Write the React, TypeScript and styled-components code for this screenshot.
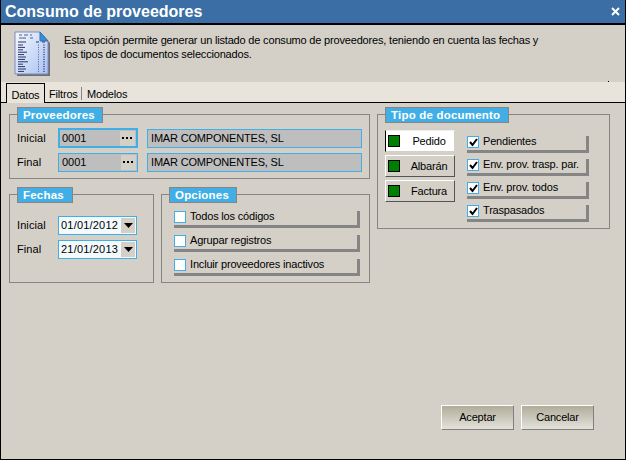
import React from 'react';
import styled, { createGlobalStyle } from 'styled-components';

const UI_FONT = `"Liberation Sans", Arial, sans-serif`;
const CYAN = '#41afe6';
const FACE = '#d4d0c8';
const LINE = '#858585';

const GlobalStyle = createGlobalStyle`
  html, body {
    margin: 0;
    padding: 0;
    background: ${FACE};
  }
  * {
    box-sizing: border-box;
  }
`;

const Window = styled.div`
  width: 626px;
  height: 460px;
  display: flex;
  flex-direction: column;
  background: ${FACE};
  border: 1px solid #000;
  border-top: 0;
  font-family: ${UI_FONT};
  font-size: 11px;
  letter-spacing: -0.18px;
  color: #000;
  overflow: hidden;
  white-space: nowrap;
`;

const TitleBar = styled.div`
  height: 25px;
  flex: none;
  display: flex;
  align-items: center;
  justify-content: space-between;
  padding: 0 5px 0 4px;
  background: #3a6ea5;
  border-bottom: 2px solid #000;
  color: #fff;
`;

const TitleText = styled.span`
  font-size: 16px;
  font-weight: 700;
  letter-spacing: 0;
`;

const Header = styled.div`
  position: relative;
  height: 57px;
  flex: none;
  display: flex;
  padding: 6px 0 0 13px;

  &::after {
    content: '';
    position: absolute;
    right: 16px;
    bottom: 0;
    width: 1px;
    height: 1px;
    background: #000;
  }
`;

const HeaderText = styled.p`
  margin: 2px 0 0 13px;
  line-height: 14px;
`;

const TabStrip = styled.div`
  height: 21px;
  flex: none;
  display: flex;
  align-items: flex-end;
  padding-left: 5px;
  background: #e8e4dc;
  border-bottom: 1px solid #000;
`;

const ActiveTab = styled.div`
  position: relative;
  top: 1px;
  width: 39px;
  height: 20px;
  display: flex;
  align-items: center;
  justify-content: center;
  padding-top: 2px;
  background: #e8e4dc;
  border: 1px solid #000;
  border-bottom: 0;
`;

const Tab = styled.div<{ $width: number; $divided?: boolean }>`
  width: ${p => p.$width}px;
  height: 13px;
  margin-bottom: 2px;
  display: flex;
  align-items: center;
  padding-left: ${p => (p.$divided ? 4 : 5)}px;
  border-right: ${p => (p.$divided ? `1px solid ${LINE}` : '0')};
`;

const Content = styled.div`
  flex: 1;
  display: flex;
  gap: 7px;
  padding: 11px 0 0 8px;
`;

const LeftColumn = styled.div`
  width: 361px;
  display: flex;
  flex-direction: column;
  gap: 15px;
`;

const RightColumn = styled.div`
  width: 233px;
`;

const BottomRow = styled.div`
  display: flex;
  gap: 7px;
`;

const Group = styled.fieldset<{ $width?: number; $height: number; $pad: string }>`
  position: relative;
  margin: 0;
  min-width: 0;
  width: ${p => (p.$width ? `${p.$width}px` : '100%')};
  height: ${p => p.$height}px;
  padding: ${p => p.$pad};
  border: 1px solid ${LINE};
`;

const GroupLabel = styled.div<{ $width: number }>`
  position: absolute;
  top: -8px;
  left: 7px;
  width: ${p => p.$width}px;
  height: 16px;
  display: flex;
  align-items: center;
  padding-left: 5px;
  background: ${CYAN};
  border: 1px solid ${LINE};
  color: #fff;
  font-size: 11.5px;
  font-weight: 700;
  letter-spacing: 0.2px;
`;

const FieldRows = styled.div`
  display: flex;
  flex-direction: column;
  gap: 4px;
`;

const FieldRow = styled.div`
  display: flex;
  align-items: center;
  height: 20px;
`;

const FieldLabel = styled.span`
  width: 41px;
  flex: none;
  letter-spacing: 0.1px;
`;

const CodeInput = styled.div<{ $focused?: boolean }>`
  width: 80px;
  height: ${p => (p.$focused ? '20px' : '19px')};
  display: flex;
  align-items: center;
  justify-content: space-between;
  padding: 0 1px 0 ${p => (p.$focused ? '2px' : '3px')};
  background: #bebebe;
  border: ${p => (p.$focused ? 2 : 1)}px solid ${CYAN};
  letter-spacing: 0;
`;

const DotsButton = styled.span`
  width: 15px;
  height: 15px;
  display: flex;
  align-items: center;
  justify-content: center;
  background: ${FACE};
`;

const NameField = styled.div`
  width: 215px;
  height: 19px;
  margin-left: 9px;
  display: flex;
  align-items: center;
  padding-left: 3px;
  background: #bebebe;
  border: 1px solid ${CYAN};
`;

const DateInput = styled.div`
  width: 79px;
  height: 19px;
  display: flex;
  align-items: center;
  justify-content: space-between;
  padding: 0 1px 0 2px;
  background: #f3fafe;
  border: 1px solid ${CYAN};
  letter-spacing: 0.2px;
`;

const ArrowButton = styled.span`
  width: 14px;
  height: 15px;
  display: flex;
  align-items: center;
  justify-content: center;
  background: ${FACE};
`;

const CheckList = styled.div<{ $gap: number; $top?: number }>`
  display: flex;
  flex-direction: column;
  gap: ${p => p.$gap}px;
  padding-top: ${p => p.$top ?? 0}px;
`;

const CheckRow = styled.div<{ $width: number }>`
  width: ${p => p.$width}px;
  height: 17px;
  display: flex;
  align-items: flex-start;
  gap: 4px;
  border-right: 3px solid ${LINE};
  border-bottom: 3px solid ${LINE};
`;

const CheckBox = styled.span`
  width: 12px;
  height: 12px;
  flex: none;
  display: flex;
  align-items: center;
  justify-content: center;
  background: #fff;
  border: 1px solid ${CYAN};
`;

const CheckText = styled.span`
  line-height: 10px;
`;

const TipoBody = styled.div`
  display: flex;
  gap: 12px;
`;

const TipoButtons = styled.div`
  display: flex;
  flex-direction: column;
  gap: 3px;
`;

const TipoButton = styled.div<{ $active?: boolean }>`
  width: 70px;
  height: 22px;
  display: flex;
  align-items: center;
  padding: 0 2px;
  background: ${p => (p.$active ? '#fff' : FACE)};
  border: 1px solid;
  border-color: #fff #555 #555 #fff;
  ${p => p.$active && `border-color: #eee ${FACE} ${FACE} #000;`}
`;

const Led = styled.span`
  width: 12px;
  height: 12px;
  flex: none;
  background: #008000;
  border: 1px solid #000;
`;

const TipoText = styled.span`
  flex: 1;
  text-align: center;
  padding-left: 6px;
`;

const ButtonBar = styled.div`
  flex: none;
  display: flex;
  justify-content: flex-end;
  gap: 7px;
  padding: 0 31px 29px 0;
`;

const ActionButton = styled.div`
  width: 73px;
  height: 25px;
  display: flex;
  align-items: center;
  justify-content: center;
  padding-bottom: 1px;
  background: linear-gradient(#b0ad9a, #e4e2da);
  border: 1px solid;
  border-color: #fff #7f7f7f #7f7f7f #fff;
`;

const TEXT_ROWS = [5, 7, 5, 9, 6, 8, 7, 10, 5, 7, 8, 6];

const ReportIcon = () => (
  <svg width="37" height="46" viewBox="0 0 37 46">
    <defs>
      <linearGradient id="paper" x1="0" y1="0" x2="1" y2="1">
        <stop offset="0" stopColor="#f4f8ff" />
        <stop offset="1" stopColor="#a9c1f2" />
      </linearGradient>
    </defs>
    <path d="M3 3h25l8 9v33H3z" fill="#6d6d78" />
    <path d="M1 1h25l8 9v33H1z" fill="url(#paper)" stroke="#7f8db8" />
    <path d="M26 1l8 9h-8z" fill="#2f8fe0" stroke="#3a6ea5" />
    <path d="M5 4h3M10 4h4M16 4h2M5 7h7M16 7h3" stroke="#555e80" />
    <path d="M4 11h8M22 11h3M28 11h3" stroke="#2b3566" />
    {TEXT_ROWS.map((len, i) => (
      <g key={i} stroke="#2b3566">
        <path d={`M4 ${14 + i * 2.4}h${len}`} />
        <path d={`M24 ${14 + i * 2.4}h1M29 ${14 + i * 2.4}h2`} opacity="0.7" />
      </g>
    ))}
  </svg>
);

const CloseIcon = () => (
  <svg width="9" height="9" viewBox="0 0 9 9">
    <path d="M1 1l7 7M8 1l-7 7" stroke="#fff" strokeWidth="2" />
  </svg>
);

const Dots = () => (
  <svg width="11" height="3" viewBox="0 0 11 3">
    <path d="M0 0h2v2H0zM4 0h2v2H4zM8 0h2v2H8z" fill="#000" />
  </svg>
);

const Arrow = () => (
  <svg width="9" height="5" viewBox="0 0 9 5">
    <path d="M0 0h9L4.5 5z" fill="#000" />
  </svg>
);

const Tick = () => (
  <svg width="9" height="9" viewBox="0 0 9 9">
    <path d="M1 4l2.5 3L8 1" fill="none" stroke="#000" strokeWidth="2" />
  </svg>
);

const Check = ({ label, checked, width }: { label: string; checked?: boolean; width: number }) => (
  <CheckRow $width={width}>
    <CheckBox>{checked && <Tick />}</CheckBox>
    <CheckText>{label}</CheckText>
  </CheckRow>
);

const App = () => {
  return (
    <Window>
      <GlobalStyle />
      <TitleBar>
        <TitleText>Consumo de proveedores</TitleText>
        <CloseIcon />
      </TitleBar>
      <Header>
        <ReportIcon />
        <HeaderText>
          Esta opción permite generar un listado de consumo de proveedores, teniendo en cuenta las fechas y
          <br />
          los tipos de documentos seleccionados.
        </HeaderText>
      </Header>
      <TabStrip>
        <ActiveTab>Datos</ActiveTab>
        <Tab $width={37} $divided>Filtros</Tab>
        <Tab $width={50}>Modelos</Tab>
      </TabStrip>
      <Content>
        <LeftColumn>
          <Group $height={65} $pad="13px 7px 0">
            <GroupLabel $width={86}>Proveedores</GroupLabel>
            <FieldRows>
              <FieldRow>
                <FieldLabel>Inicial</FieldLabel>
                <CodeInput $focused>
                  0001
                  <DotsButton><Dots /></DotsButton>
                </CodeInput>
                <NameField>IMAR COMPONENTES, SL</NameField>
              </FieldRow>
              <FieldRow>
                <FieldLabel>Final</FieldLabel>
                <CodeInput>
                  0001
                  <DotsButton><Dots /></DotsButton>
                </CodeInput>
                <NameField>IMAR COMPONENTES, SL</NameField>
              </FieldRow>
            </FieldRows>
          </Group>
          <BottomRow>
            <Group $width={145} $height={89} $pad="20px 7px 0">
              <GroupLabel $width={56}>Fechas</GroupLabel>
              <FieldRows>
                <FieldRow>
                  <FieldLabel>Inicial</FieldLabel>
                  <DateInput>
                    01/01/2012
                    <ArrowButton><Arrow /></ArrowButton>
                  </DateInput>
                </FieldRow>
                <FieldRow>
                  <FieldLabel>Final</FieldLabel>
                  <DateInput>
                    21/01/2013
                    <ArrowButton><Arrow /></ArrowButton>
                  </DateInput>
                </FieldRow>
              </FieldRows>
            </Group>
            <Group $width={209} $height={89} $pad="16px 12px 0">
              <GroupLabel $width={68}>Opciones</GroupLabel>
              <CheckList $gap={7}>
                <Check width={186} label="Todos los códigos" />
                <Check width={186} label="Agrupar registros" />
                <Check width={186} label="Incluir proveedores inactivos" />
              </CheckList>
            </Group>
          </BottomRow>
        </LeftColumn>
        <RightColumn>
          <Group $height={115} $pad="15px 7px 0">
            <GroupLabel $width={124}>Tipo de documento</GroupLabel>
            <TipoBody>
              <TipoButtons>
                <TipoButton $active><Led /><TipoText>Pedido</TipoText></TipoButton>
                <TipoButton><Led /><TipoText>Albarán</TipoText></TipoButton>
                <TipoButton><Led /><TipoText>Factura</TipoText></TipoButton>
              </TipoButtons>
              <CheckList $gap={6} $top={6}>
                <Check width={122} checked label="Pendientes" />
                <Check width={122} checked label="Env. prov. trasp. par." />
                <Check width={122} checked label="Env. prov. todos" />
                <Check width={122} checked label="Traspasados" />
              </CheckList>
            </TipoBody>
          </Group>
        </RightColumn>
      </Content>
      <ButtonBar>
        <ActionButton>Aceptar</ActionButton>
        <ActionButton>Cancelar</ActionButton>
      </ButtonBar>
    </Window>
  );
};

export default App;
